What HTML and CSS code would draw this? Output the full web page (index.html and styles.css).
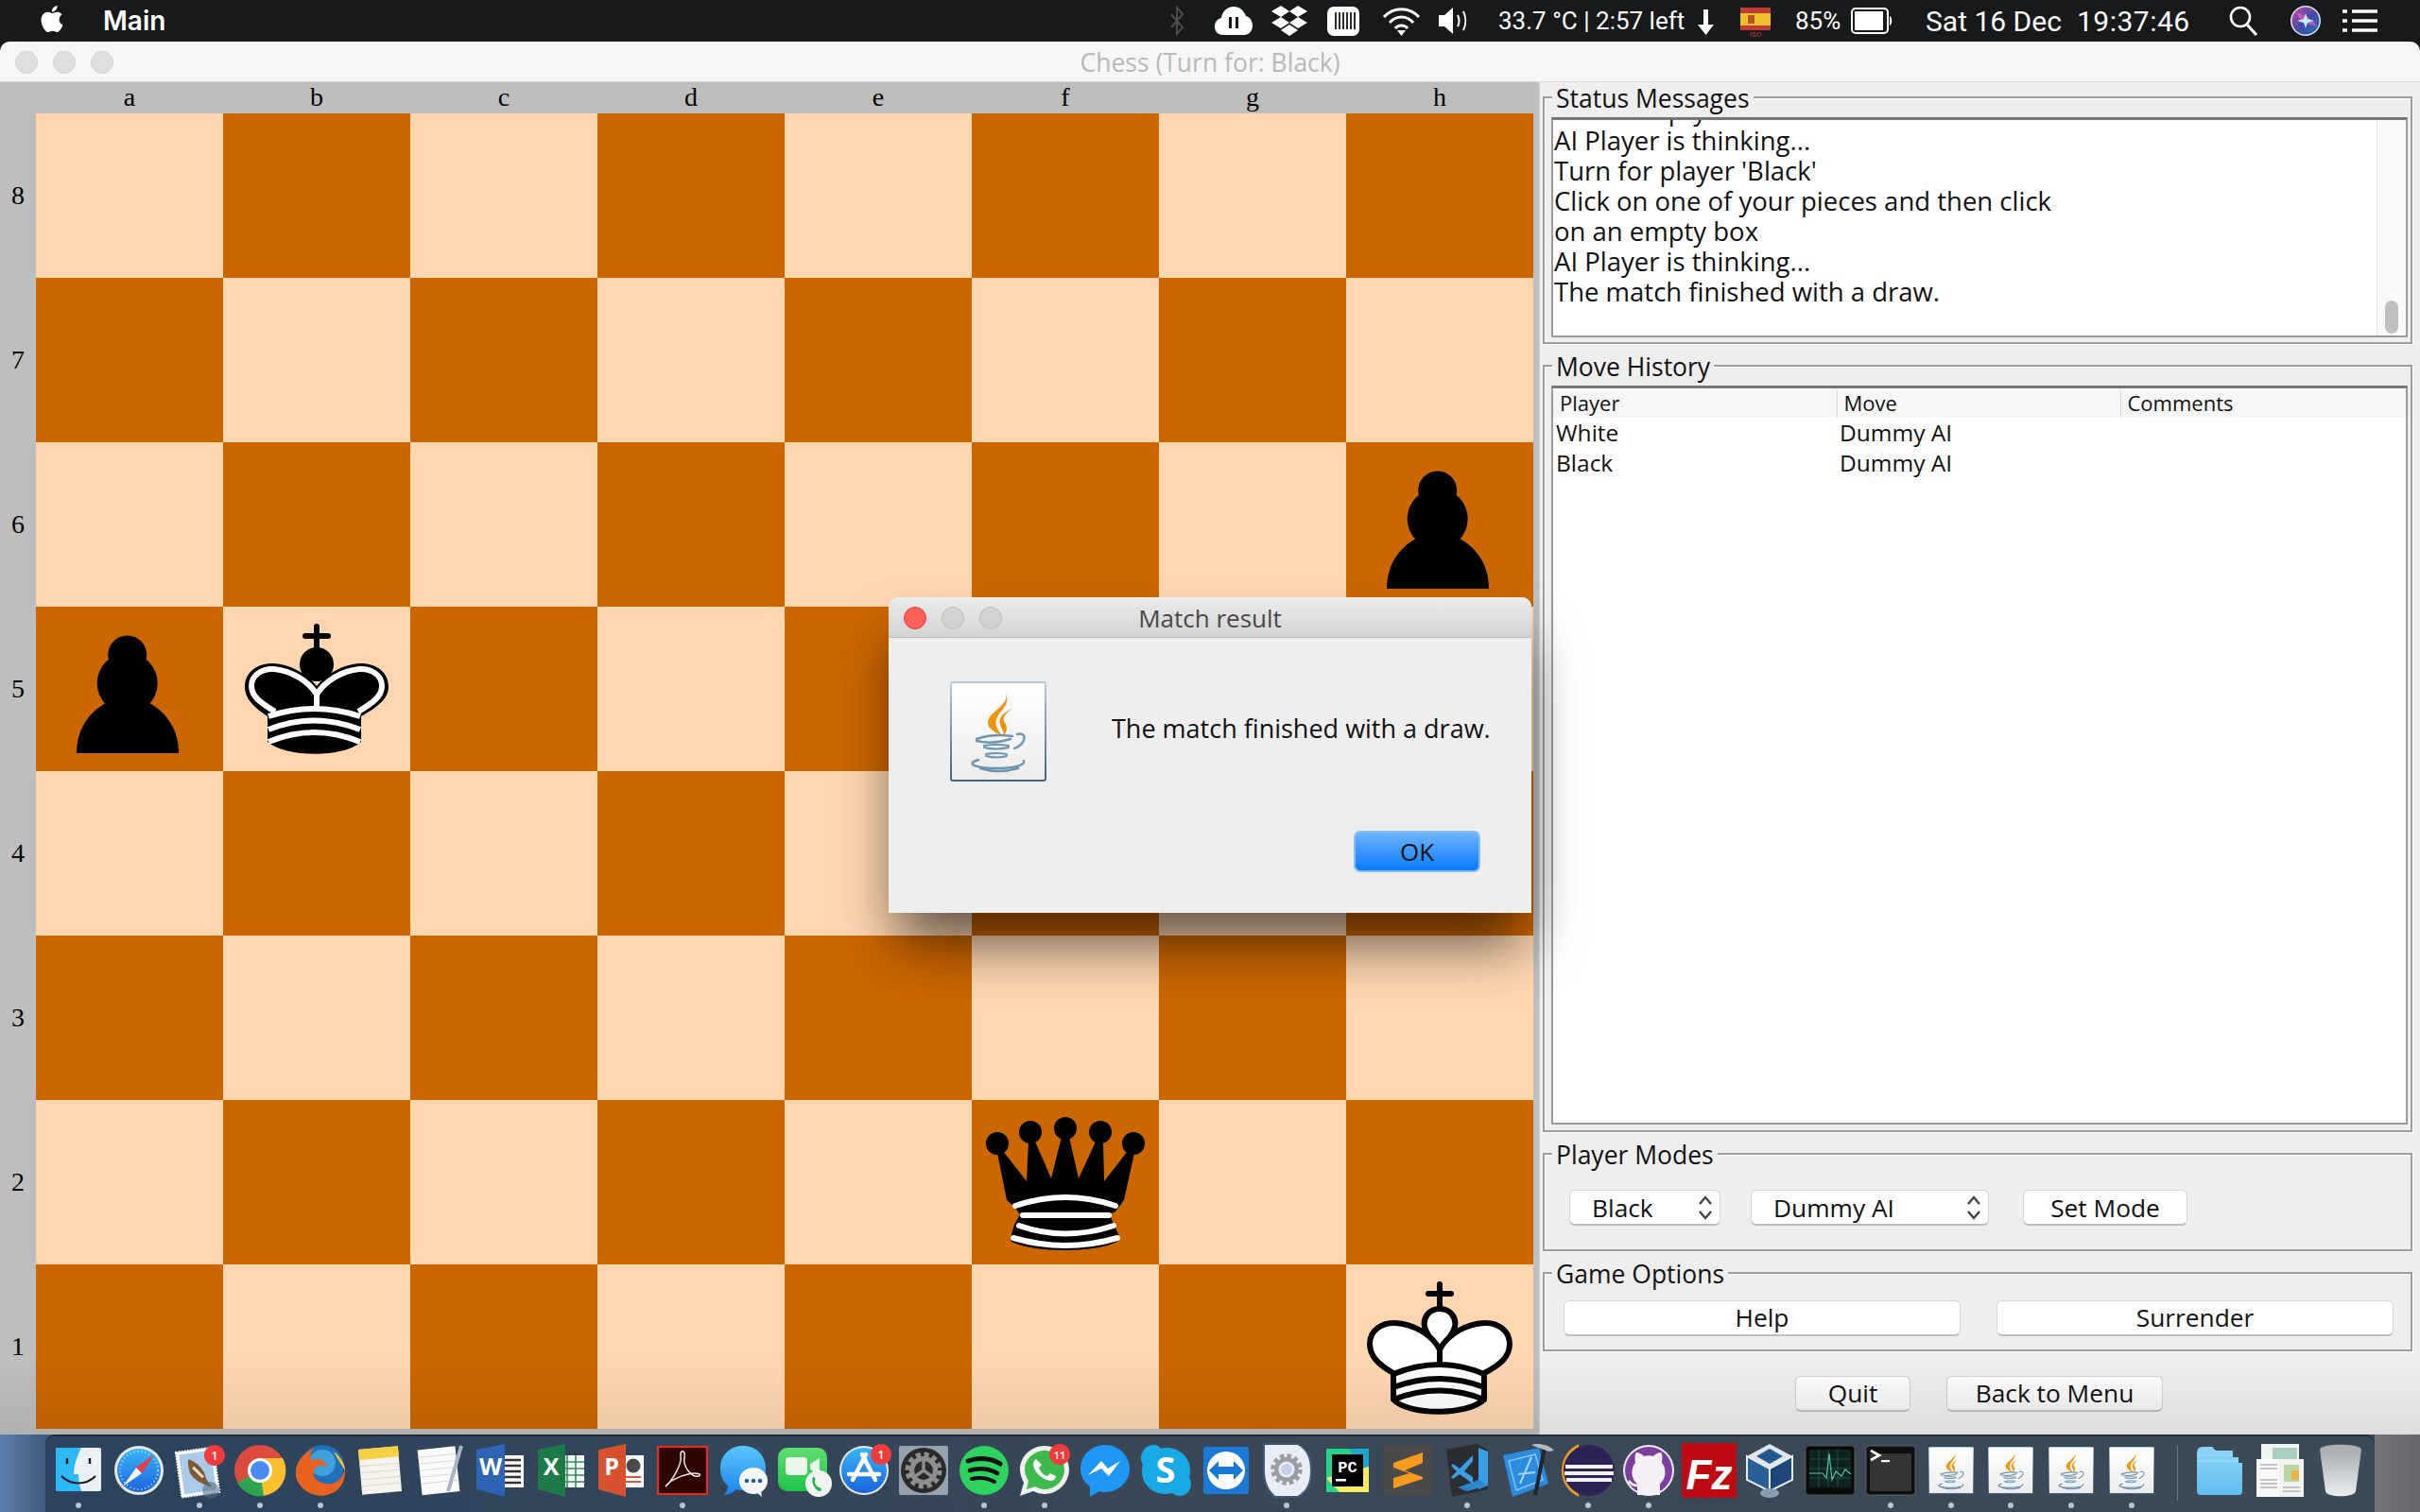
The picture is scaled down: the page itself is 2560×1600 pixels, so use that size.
FILE: index.html
```html
<!DOCTYPE html>
<html>
<head>
<meta charset="utf-8">
<title>Chess</title>
<link rel="stylesheet" href="styles.css">
</head>
<body>

<svg class="defs" width="0" height="0">
	<defs>
		<linearGradient id="paper" x1="0" y1="0" x2="0" y2="1"><stop offset="0" stop-color="#ffffff"/><stop offset="1" stop-color="#ececec"/></linearGradient>
		<linearGradient id="paperedge" x1="0" y1="0" x2="0" y2="1"><stop offset="0" stop-color="#b4cbe0"/><stop offset="1" stop-color="#43617c"/></linearGradient>
		<linearGradient id="bluedisc" x1="0" y1="0" x2="0" y2="1"><stop offset="0" stop-color="#38b6f7"/><stop offset="1" stop-color="#1a63e0"/></linearGradient>
		<linearGradient id="greenbox" x1="0" y1="0" x2="0" y2="1"><stop offset="0" stop-color="#5fe06f"/><stop offset="1" stop-color="#1ec24a"/></linearGradient>
		<linearGradient id="msgblue" x1="0" y1="0" x2="0" y2="1"><stop offset="0" stop-color="#5ac8fa"/><stop offset="1" stop-color="#1a84f0"/></linearGradient>
		<linearGradient id="foldertab" x1="0" y1="0" x2="0" y2="1"><stop offset="0" stop-color="#8dd6f8"/><stop offset="1" stop-color="#62bdf0"/></linearGradient>
		<linearGradient id="trashcan" x1="0" y1="0" x2="0" y2="1"><stop offset="0" stop-color="#9fa6ab"/><stop offset="1" stop-color="#eceef0"/></linearGradient>
		<linearGradient id="siri" x1="0" y1="0" x2="1" y2="1"><stop offset="0" stop-color="#c9459f"/><stop offset=".55" stop-color="#3f4aa8"/><stop offset="1" stop-color="#2276b8"/></linearGradient>

		<symbol id="java" viewBox="0 0 102 106">
			<rect x="1" y="1" width="100" height="104" rx="2" fill="url(#paper)" stroke="url(#paperedge)" stroke-width="2"/>
			<path d="M59 11C64 26 40 32 40 44C40 50 48 54 55 58C50 50 46 46 50 38C53 30 64 26 59 11Z" fill="#ee950f"/>
			<path d="M68 28C58 32 50 38 53 46C54 50 58 53 56 58C62 52 60 46 57 42C55 38 60 32 68 28Z" fill="#ee950f"/>
			<g fill="none" stroke="#6d94b0" stroke-width="2.4" stroke-linecap="round">
				<path d="M28 61Q45 55 66 58"/>
				<path d="M28 63Q45 67 64 61"/>
				<path d="M71 56C82 53 81 66 68 71"/>
				<path d="M36 68Q48 66 62 68" stroke-width="2"/>
				<path d="M36 70Q48 73 62 70" stroke-width="2"/>
				<path d="M38 77Q50 75 60 77" stroke-width="2"/>
				<path d="M38 79Q50 82 60 79" stroke-width="2"/>
				<path d="M30 83C14 88 30 92 50 92C66 92 80 89 78 84"/>
				<path d="M32 92Q50 98 72 92"/>
			</g>
		</symbol>

		<symbol id="gear" viewBox="0 0 60 60">
			<circle cx="30" cy="30" r="17" fill="none" stroke="currentColor" stroke-width="7"/>
			<circle cx="30" cy="30" r="23" fill="none" stroke="currentColor" stroke-width="7" stroke-dasharray="7 5.05"/>
		</symbol>
	</defs>
</svg>

<div class="menubar">
	<svg class="m-apple" width="28" height="32" viewBox="0 0 24 24"><path fill="#fff" d="M12.152 6.896c-.948 0-2.415-1.078-3.96-1.04-2.04.027-3.91 1.183-4.961 3.014-2.117 3.675-.546 9.103 1.519 12.09 1.013 1.454 2.208 3.09 3.792 3.039 1.52-.065 2.09-.987 3.935-.987 1.831 0 2.35.987 3.96.948 1.637-.026 2.676-1.48 3.676-2.948 1.156-1.688 1.636-3.325 1.662-3.415-.039-.013-3.182-1.221-3.22-4.857-.026-3.04 2.48-4.494 2.597-4.559-1.429-2.09-3.623-2.324-4.39-2.376-2-.156-3.675 1.09-4.61 1.09zM15.53 3.83c.843-1.012 1.4-2.427 1.245-3.83-1.207.052-2.662.805-3.532 1.818-.78.896-1.454 2.338-1.273 3.714 1.338.104 2.715-.688 3.559-1.701"/></svg>
	<span class="m-app">Main</span>
	<div class="m-spacer"></div>

	<svg class="m-bt" width="16" height="32" viewBox="0 0 16 32"><path d="M2 9l12 14-6 7V2l6 7-12 14" fill="none" stroke="#4c4c4c" stroke-width="2"/></svg>
	<svg class="m-cloud" width="40" height="32" viewBox="0 0 40 32"><path fill="#fff" d="M9 31C3 31 0 27 0 22c0-5 3-8 7-9C8 6 13 1 20 1c6 0 11 4 13 10 4 1 7 5 7 10 0 6-4 10-9 10z"/><rect x="15" y="12" width="3" height="12" fill="#18191b"/><rect x="22" y="12" width="3" height="12" fill="#18191b"/></svg>
	<svg class="m-drop" width="38" height="32" viewBox="0 0 38 32"><path fill="#fff" d="M10 0l9 6-9 6-10-6zM28 0l10 6-10 6-9-6zM0 18l10-6 9 6-9 6zM38 18l-10-6-9 6 9 6zM10 26l9-6 9 6-9 6z"/></svg>
	<svg class="m-istat" width="34" height="32" viewBox="0 0 34 32"><rect width="34" height="31" y="1" rx="7" fill="#fff"/><path d="M9 7v18M13 7v18M17 7v18M21 7v18M25 7v18M29 7v18" stroke="#18191b" stroke-width="1.8"/></svg>
	<svg class="m-wifi" width="41" height="32" viewBox="0 0 41 32"><g fill="none" stroke="#fff" stroke-width="3"><path d="M2 12C12 1 29 1 39 12"/><path d="M8 18C15 10 26 10 33 18"/><path d="M14 24C17 20 24 20 27 24"/></g><path d="M20.500 32l-4.500-6h9z" fill="#fff"/></svg>
	<svg class="m-vol" width="33" height="32" viewBox="0 0 33 32"><path fill="#fff" d="M0 10h6l9-8v28l-9-8H0z"/><g fill="none" stroke="#fff" stroke-width="2"><path d="M20 10c2 4 2 8 0 12"/><path d="M26 6c3 6 3 14 0 20"/></g></svg>
	<span class="m-text m-temp">33.7 °C | 2:57 left</span>
	<svg class="m-arrow" width="17" height="32" viewBox="0 0 17 32"><path fill="#fff" d="M6 4h5v16h6L8.500 31 0 20h6z"/></svg>
	<svg class="m-flag" width="32" height="36" viewBox="0 0 32 36"><rect y="4" width="32" height="6" fill="#c23a35"/><rect y="10" width="32" height="13" fill="#f1bf2b"/><rect y="23" width="32" height="5" fill="#c23a35"/><rect x="8" y="12" width="7" height="9" fill="#b3542a"/><text x="16" y="35" class="m-iso">ISO</text></svg>
	<span class="m-text m-pct">85%</span>
	<svg class="m-batt" width="44" height="28" viewBox="0 0 44 28"><rect x="1" y="1" width="38" height="26" rx="4" fill="none" stroke="#fff" stroke-width="2"/><rect x="4" y="4" width="30" height="20" fill="#fff"/><path d="M41 9c3 1 3 9 0 10z" fill="#fff"/></svg>
	<span class="m-text m-date">Sat 16 Dec</span>
	<span class="m-text m-time">19:37:46</span>
	<svg class="m-search" width="30" height="32" viewBox="0 0 30 32"><circle cx="12" cy="12" r="10" fill="none" stroke="#fff" stroke-width="2.600"/><path d="M19 20l10 11" stroke="#fff" stroke-width="3"/></svg>
	<svg class="m-siri" width="32" height="32" viewBox="0 0 32 32"><circle cx="16" cy="16" r="16" fill="#dfe3ea"/><circle cx="16" cy="16" r="14.500" fill="url(#siri)"/><path d="M6 7C14 10 22 12 28 22 20 20 10 18 6 7Z" fill="#e65fc0" opacity=".7"/><path d="M16 8l2 6 7 2-7 2-2 6-2-6-7-2 7-2z" fill="#bdf2f7"/></svg>
	<svg class="m-list" width="37" height="26" viewBox="0 0 37 26"><path d="M0 3h5M10 3h27M0 13h5M10 13h27M0 23h5M10 23h27" stroke="#fff" stroke-width="3.400"/></svg>
</div>

<div class="window">
	<div class="titlebar">
		<div class="lights">
			<span class="light"></span><span class="light"></span><span class="light"></span>
		</div>
		<span class="title">Chess (Turn for: Black)</span>
	</div>

	<div class="content">
		<div class="board">
			<div></div>
			<div class="col">a</div><div class="col">b</div><div class="col">c</div><div class="col">d</div><div class="col">e</div><div class="col">f</div><div class="col">g</div><div class="col">h</div>

			<div class="row">8</div>
			<div class="sq lt"></div><div class="sq dk"></div><div class="sq lt"></div><div class="sq dk"></div><div class="sq lt"></div><div class="sq dk"></div><div class="sq lt"></div><div class="sq dk"></div>

			<div class="row">7</div>
			<div class="sq dk"></div><div class="sq lt"></div><div class="sq dk"></div><div class="sq lt"></div><div class="sq dk"></div><div class="sq lt"></div><div class="sq dk"></div><div class="sq lt"></div>

			<div class="row">6</div>
			<div class="sq lt"></div><div class="sq dk"></div><div class="sq lt"></div><div class="sq dk"></div><div class="sq lt"></div><div class="sq dk"></div><div class="sq lt"></div>
			<div class="sq dk">
				<svg class="piece" viewBox="0 0 198 174"><circle cx="96.700" cy="51" r="20.500"/><circle cx="96.700" cy="81" r="32"/><path d="M43 155C43 128 58 109 78 100H116C136 109 151 128 151 155Z"/></svg>
			</div>

			<div class="row">5</div>
			<div class="sq dk">
				<svg class="piece" viewBox="0 0 198 174"><circle cx="96.700" cy="51" r="20.500"/><circle cx="96.700" cy="81" r="32"/><path d="M43 155C43 128 58 109 78 100H116C136 109 151 128 151 155Z"/></svg>
			</div>
			<div class="sq lt">
				<svg class="piece" viewBox="0 0 198 174">
					<path d="M99 21V45M87 31H111" stroke="#000" stroke-width="6" stroke-linecap="round" fill="none"/>
					<circle cx="99" cy="61" r="18"/>
					<path d="M47 116C32 106 23 97 23 85 23 68 38 59 54 60 70 61 88 70 99 84 110 70 128 61 144 60 160 59 175 68 175 85 175 97 164 106 146 116V143C128 160 66 160 47 143Z"/>
					<path d="M55 111C40 102 30 95 30 84 30 72 42 65 54 66 72 68 90 78 99 93 108 78 126 68 144 66 156 65 168 72 168 84 168 95 158 102 143 111M99 93V108" fill="none" stroke="#fff" stroke-width="6"/>
					<path d="M48 116Q96 100 145 116M48 130Q96 111 145 130M48 143Q96 123 145 143" fill="none" stroke="#fff" stroke-width="6"/>
				</svg>
			</div>
			<div class="sq dk"></div><div class="sq lt"></div><div class="sq dk"></div><div class="sq lt"></div><div class="sq dk"></div><div class="sq lt"></div>

			<div class="row">4</div>
			<div class="sq lt"></div><div class="sq dk"></div><div class="sq lt"></div><div class="sq dk"></div><div class="sq lt"></div><div class="sq dk"></div><div class="sq lt"></div><div class="sq dk"></div>

			<div class="row">3</div>
			<div class="sq dk"></div><div class="sq lt"></div><div class="sq dk"></div><div class="sq lt"></div><div class="sq dk"></div><div class="sq lt"></div><div class="sq dk"></div><div class="sq lt"></div>

			<div class="row">2</div>
			<div class="sq lt"></div><div class="sq dk"></div><div class="sq lt"></div><div class="sq dk"></div><div class="sq lt"></div>
			<div class="sq dk">
				<svg class="piece" viewBox="0 0 198 174">
					<circle cx="27" cy="46" r="12"/><circle cx="62" cy="34" r="12"/><circle cx="99" cy="30" r="12"/><circle cx="136" cy="34" r="12"/><circle cx="171" cy="46" r="12"/>
					<path d="M37 106L27 56 33 54 58 86 60 44H67L84 83 95 39H103L113 83 131 44H139L140 86 165 54 172 56 161 106 152 118 146 121 149 129 156 144 154 150C130 162 66 162 42 150L41 146 45 132 51 121 45 113Z"/>
					<path d="M46 112Q99 94 152 112M54 122H145M50 133Q99 150 150 133M44 146Q99 162 154 146" fill="none" stroke="#fff" stroke-width="6" stroke-linecap="round"/>
				</svg>
			</div>
			<div class="sq lt"></div><div class="sq dk"></div>

			<div class="row">1</div>
			<div class="sq dk"></div><div class="sq lt"></div><div class="sq dk"></div><div class="sq lt"></div><div class="sq dk"></div><div class="sq lt"></div><div class="sq dk"></div>
			<div class="sq lt">
				<svg class="piece" viewBox="0 0 198 174">
					<path d="M99 21V44M87 31H111" stroke="#000" stroke-width="6" stroke-linecap="round" fill="none"/>
					<path d="M99 47C88 47 81 56 83 66 85 74 92 82 99 92 106 82 113 74 115 66 117 56 110 47 99 47Z" fill="#fff" stroke="#000" stroke-width="6"/>
					<path d="M50 115C34 106 25 97 25 84 25 70 38 61 52 62 70 63 90 73 99 90 108 73 128 63 146 62 160 61 173 70 173 84 173 97 164 106 146 115V143C128 160 66 160 50 143Z" fill="#fff" stroke="#000" stroke-width="6" stroke-linejoin="round"/>
					<path d="M99 90V108M50 116Q99 96 146 116M50 130Q99 112 146 130M50 143Q99 124 146 143" fill="none" stroke="#000" stroke-width="6"/>
				</svg>
			</div>
		</div>

		<div class="panel">
			<fieldset class="group group-status">
				<legend>Status Messages</legend>
				<div class="textbox">
					<div class="textclip">
						<div class="msg msg-cut">on an empty box</div>
						<div class="msg">AI Player is thinking...</div>
						<div class="msg">Turn for player 'Black'</div>
						<div class="msg">Click on one of your pieces and then click</div>
						<div class="msg">on an empty box</div>
						<div class="msg">AI Player is thinking...</div>
						<div class="msg">The match finished with a draw.</div>
					</div>
					<div class="scrollbar"><div class="thumb"></div></div>
				</div>
			</fieldset>

			<fieldset class="group group-history">
				<legend>Move History</legend>
				<div class="tablebox">
					<table class="moves">
						<tr><th>Player</th><th>Move</th><th>Comments</th></tr>
						<tr><td>White</td><td>Dummy AI</td><td></td></tr>
						<tr><td>Black</td><td>Dummy AI</td><td></td></tr>
					</table>
				</div>
			</fieldset>

			<fieldset class="group group-modes">
				<legend>Player Modes</legend>
				<div class="modes">
					<div class="btn combo combo-side">Black
						<svg class="updown" width="16" height="28" viewBox="0 0 16 28"><path d="M2 10l6-7 6 7M2 18l6 7 6-7" fill="none" stroke="#444" stroke-width="2.400"/></svg>
					</div>
					<div class="btn combo combo-ai">Dummy AI
						<svg class="updown" width="16" height="28" viewBox="0 0 16 28"><path d="M2 10l6-7 6 7M2 18l6 7 6-7" fill="none" stroke="#444" stroke-width="2.400"/></svg>
					</div>
					<div class="btn btn-setmode">Set Mode</div>
				</div>
			</fieldset>

			<fieldset class="group group-options">
				<legend>Game Options</legend>
				<div class="options">
					<div class="btn">Help</div>
					<div class="btn">Surrender</div>
				</div>
			</fieldset>

			<div class="foot">
				<div class="btn btn-quit">Quit</div>
				<div class="btn btn-back">Back to Menu</div>
			</div>
		</div>
	</div>

	<div class="dockshade"></div>

	<div class="dialog">
		<div class="dialog-title">
			<div class="lights dialog-lights">
				<span class="light light-close"></span><span class="light light-off"></span><span class="light light-off"></span>
			</div>
			<span class="dialog-name">Match result</span>
		</div>
		<div class="dialog-body">
			<svg class="dialog-icon" width="102" height="106"><use href="#java"/></svg>
			<div class="dialog-msg">The match finished with a draw.</div>
		</div>
		<div class="dialog-foot"><div class="btn-ok">OK</div></div>
	</div>
</div>

<div class="desktop">
	<div class="dock">
		<div class="ditem"><svg viewBox="0 0 60 60"><rect x="6" y="6" width="48" height="46" rx="2" fill="#eaf0f5"/><path d="M8 6H33C28 16 25 26 25 34H30C30 40 31 46 33 52H8A2 2 0 0 1 6 50V8A2 2 0 0 1 8 6Z" fill="#2db8f6"/><path d="M18 17v6M42 17v6" stroke="#1a1a1a" stroke-width="2.400"/><path d="M12 36C22 46 38 46 48 36" fill="none" stroke="#1a1a1a" stroke-width="2"/></svg><i class="dot"></i></div>

		<div class="ditem"><svg viewBox="0 0 60 60"><circle cx="30" cy="30" r="26" fill="#e6e8ea"/><circle cx="30" cy="30" r="23" fill="url(#bluedisc)"/><circle cx="30" cy="30" r="20" fill="none" stroke="#bfe1fa" stroke-width="2" stroke-dasharray="1 3"/><path d="M46 13L33 33 27 27Z" fill="#ee3a3a"/><path d="M13 47L27 27 33 33Z" fill="#f3f3f3"/></svg><i class="dot dot-off"></i></div>

		<div class="ditem"><svg viewBox="0 0 60 60"><g transform="rotate(-8 28 32)"><rect x="8" y="8" width="40" height="48" fill="#fff" stroke="#fff" stroke-width="2" stroke-dasharray="2 1"/><rect x="11" y="11" width="34" height="42" fill="#a9cbe8"/><path d="M20 17C28 20 36 30 36 40L41 50C34 46 24 42 20 32 19 26 19 22 20 17Z" fill="#7c5a3a"/><path d="M24 26L33 38" stroke="#e9dcc6" stroke-width="3"/></g><circle cx="42" cy="51" r="9" fill="#56677e" opacity=".55"/><circle cx="46" cy="14" r="11" fill="#ee3b3b"/><text x="46" y="19" class="badge-text">1</text></svg><i class="dot"></i></div>

		<div class="ditem"><svg viewBox="0 0 60 60"><circle cx="30" cy="30" r="27" fill="#dd4b3f"/><path d="M30 30V57A27 27 0 0 0 54 17H30Z" fill="#fbc02d"/><path d="M30 30L6 43A27 27 0 0 0 34 57Z" fill="#2da44e"/><circle cx="30" cy="30" r="13" fill="#fff"/><circle cx="30" cy="30" r="10" fill="#4a8af4"/></svg><i class="dot"></i></div>

		<div class="ditem"><svg viewBox="0 0 60 60"><circle cx="32" cy="26" r="23" fill="#1f70b8"/><circle cx="32" cy="22" r="14" fill="#3fa0dd"/><path d="M24 6C6 14 0 30 6 42 12 54 28 60 40 55 50 52 57 42 56 28 54 38 46 46 36 44 26 43 20 36 24 28 27 24 34 24 38 26 34 18 26 16 20 20 19 14 20 10 24 6Z" fill="#e8631f"/><path d="M44 10C52 16 56 24 56 30 52 24 48 18 44 10Z" fill="#f7c22b"/></svg><i class="dot"></i></div>

		<div class="ditem"><svg viewBox="0 0 60 60"><g transform="rotate(-5 30 30)"><rect x="9" y="6" width="42" height="48" fill="#f5f3ec"/><rect x="9" y="6" width="42" height="11" fill="#f6d044"/><path d="M9 24H51M9 31H51M9 38H51M9 45H51" stroke="#d8d6ce"/></g></svg><i class="dot dot-off"></i></div>

		<div class="ditem"><svg viewBox="0 0 60 60"><g transform="rotate(-6 30 30)"><rect x="8" y="6" width="40" height="48" fill="#fbfbfb"/><path d="M8 14H48M8 21H48M8 28H48M8 35H48M8 42H48" stroke="#d5d9df"/></g><path d="M52 4L38 52" stroke="#a7b6c4" stroke-width="4"/></svg><i class="dot dot-off"></i></div>

		<div class="ditem"><svg viewBox="0 0 60 60"><rect x="30" y="14" width="24" height="34" fill="#fbfbfb"/><path d="M34 19h17M34 25h17M34 31h17M34 37h17M34 43h17" stroke="#333" stroke-width="2.600"/><path d="M4 8L34 2V58L4 50Z" fill="#2f64b4"/><text x="19" y="35" class="icon-letter">W</text></svg><i class="dot dot-off"></i></div>

		<div class="ditem"><svg viewBox="0 0 60 60"><rect x="30" y="14" width="24" height="34" fill="#fbfbfb"/><path d="M36 14v34M45 14v34M30 21h24M30 28h24M30 35h24M30 42h24" stroke="#2d8f55" stroke-width="1.600"/><path d="M5 8L34 2V58L5 50Z" fill="#1d7a48"/><text x="19" y="35" class="icon-letter">X</text></svg><i class="dot dot-off"></i></div>

		<div class="ditem"><svg viewBox="0 0 60 60"><rect x="30" y="14" width="23" height="34" fill="#fbfbfb"/><circle cx="42" cy="25" r="7.500" fill="#4a4a4a"/><path d="M34 37h16M34 42h16" stroke="#d8573a" stroke-width="2"/><path d="M5 8L34 2V58L5 50Z" fill="#d9502e"/><text x="19" y="35" class="icon-letter">P</text></svg><i class="dot dot-off"></i></div>

		<div class="ditem"><svg viewBox="0 0 60 60"><rect x="3" y="4" width="54" height="52" fill="#ed2a1d"/><rect x="5" y="6" width="50" height="48" fill="#2f0503"/><path d="M12 47C18 42 30 24 28 14 27 8 34 8 32 16 30 26 40 38 47 36 52 34 44 32 36 34 26 36 15 42 12 47Z" fill="none" stroke="#f4e8e4" stroke-width="1.500"/></svg><i class="dot"></i></div>

		<div class="ditem"><svg viewBox="0 0 60 60"><path d="M30 4C16 4 6 14 6 28 6 36 9 42 14 46 14 50 12 54 9 56 15 56 20 53 23 50 25 51 27 51 30 51 44 51 54 42 54 28 54 14 44 4 30 4Z" fill="url(#msgblue)"/><ellipse cx="41" cy="41" rx="15" ry="14" fill="#f4f6f8"/><path d="M44 53l6 5-1-7z" fill="#f4f6f8"/><circle cx="34" cy="41" r="2.300" fill="#1f5fa8"/><circle cx="41" cy="41" r="2.300" fill="#1f5fa8"/><circle cx="48" cy="41" r="2.300" fill="#1f5fa8"/></svg><i class="dot dot-off"></i></div>

		<div class="ditem"><svg viewBox="0 0 60 60"><rect x="3" y="6" width="52" height="46" rx="10" fill="url(#greenbox)"/><rect x="11" y="16" width="23" height="19" rx="4" fill="#eaf7ea"/><path d="M37 23l10-6v18l-10-6z" fill="#eaf7ea"/><circle cx="46" cy="44" r="14" fill="#f2f6f2"/><path d="M40 37c2-1 3 3 2 4-1 2 2 6 4 7 2 0 4 2 2 4-4 1-11-8-8-15z" fill="#25b54b"/></svg><i class="dot dot-off"></i></div>

		<div class="ditem"><svg viewBox="0 0 60 60"><circle cx="30" cy="30" r="26" fill="#e6e9ec"/><circle cx="30" cy="30" r="24" fill="url(#bluedisc)"/><path d="M32 13L18 40M28 13L42 40M14 34H46" stroke="#fff" stroke-width="4.500" stroke-linecap="round"/><circle cx="48" cy="13" r="11" fill="#ee3b3b"/><text x="48" y="18" class="badge-text">1</text></svg><i class="dot dot-off"></i></div>

		<div class="ditem"><svg viewBox="0 0 60 60"><rect x="4" y="4" width="52" height="52" rx="2" fill="#93a2ad"/><circle cx="30" cy="30" r="24" fill="#2a2a2a"/><svg x="8" y="8" width="44" height="44" color="#8e8e8e"><use href="#gear"/></svg><path d="M30 30V19M30 30L20 37M30 30L40 37" stroke="#8e8e8e" stroke-width="3.500"/></svg><i class="dot dot-off"></i></div>

		<div class="ditem"><svg viewBox="0 0 60 60"><circle cx="30" cy="30" r="26" fill="#2dd25f"/><g fill="none" stroke="#111" stroke-linecap="round"><path d="M13 20C24 16 38 17 47 23" stroke-width="5"/><path d="M15 30C24 27 36 28 44 33" stroke-width="4.500"/><path d="M17 39C25 37 34 38 41 42" stroke-width="4"/></g></svg><i class="dot"></i></div>

		<div class="ditem"><svg viewBox="0 0 60 60"><path d="M30 4C16 4 4 15 4 29 4 34 6 39 8 43L4 57 18 52C22 54 26 55 30 55 44 55 56 43 56 29 56 15 44 4 30 4Z" fill="#eef1ee"/><path d="M30 9C19 9 9 18 9 29 9 34 11 38 13 41L11 50 20 47C23 49 27 50 30 50 41 50 51 41 51 29 51 18 41 9 30 9Z" fill="#3dba4e"/><path d="M21 18C19 19 18 22 18 24 19 32 28 40 36 41 39 41 42 39 42 36L36 33 33 36C29 35 25 31 24 27L27 24Z" fill="#fff"/><circle cx="46" cy="13" r="11" fill="#ee3b3b"/><text x="46" y="18" class="badge-text badge-text-small">11</text></svg><i class="dot"></i></div>

		<div class="ditem"><svg viewBox="0 0 60 60"><path d="M30 3C16 3 4 14 4 28 4 36 8 43 14 47V58L24 52C26 53 28 53 30 53 44 53 56 42 56 28 56 14 44 3 30 3Z" fill="#1f97f7"/><path d="M12 35L26 20 33 28 46 20 34 36 26 28Z" fill="#fff"/></svg><i class="dot dot-off"></i></div>

		<div class="ditem"><svg viewBox="0 0 60 60"><path d="M18 3C10 3 4 9 4 17 4 20 5 22 6 24 5 26 5 29 5 31 5 45 16 55 30 55 33 55 35 54 37 54 40 56 42 57 45 57 52 57 57 51 57 44 57 42 56 39 55 37 56 35 56 33 56 30 56 16 45 6 31 6 29 6 27 6 25 7 23 4 21 3 18 3Z" fill="#19a9e5"/><text x="30" y="43" class="icon-skype">S</text></svg><i class="dot dot-off"></i></div>

		<div class="ditem"><svg viewBox="0 0 60 60"><rect x="6" y="5" width="48" height="50" rx="2" fill="#1a78d6"/><circle cx="30" cy="30" r="20" fill="#fff"/><path d="M12 30L22 20V26H38V20L48 30 38 40V34H22V40Z" fill="#1a78d6"/></svg><i class="dot dot-off"></i></div>

		<div class="ditem"><svg viewBox="0 0 60 60"><path d="M6 2H42C52 8 56 16 56 30 56 44 52 52 42 58H18C10 52 6 44 6 30Z" fill="#e8edf6" stroke="#40587e" stroke-width="2"/><svg x="11" y="10" width="38" height="38" color="#9a9da3"><use href="#gear"/></svg><circle cx="30" cy="29" r="6" fill="#c2d0e8"/></svg><i class="dot"></i></div>

		<div class="ditem"><svg viewBox="0 0 60 60"><rect x="8" y="7" width="45" height="46" fill="#21d789"/><path d="M32 7H53V40Z" fill="#19a7ce"/><path d="M8 38L53 26V53H22Z" fill="#f7ec5f"/><rect x="14" y="13" width="33" height="34" fill="#000"/><text x="30.500" y="32" class="icon-pc">PC</text><rect x="18" y="39" width="11" height="2.500" fill="#fff"/></svg><i class="dot dot-off"></i></div>

		<div class="ditem"><svg viewBox="0 0 60 60"><rect x="4" y="3" width="52" height="54" rx="3" fill="#4a4a4a"/><path d="M46 11V22L27 30 46 37V39L15 49V38L32 33 15 27V22Z" fill="#f89a1d"/></svg><i class="dot dot-off"></i></div>

		<div class="ditem"><svg viewBox="0 0 60 60"><path d="M8 8L40 2 52 8V50L14 58Z" fill="#2b2d31"/><path d="M42 6L52 10V46L42 50Z" fill="#3a9fe4"/><path d="M20 48L42 40 52 46 30 52Z" fill="#2a87cf"/><path d="M36 14L22 28 15 23 13 25 19 31 13 37 15 39 22 34 36 44Z" fill="#3a9fe4"/><path d="M36 20L27 31 36 37Z" fill="#2b2d31"/></svg><i class="dot"></i></div>

		<div class="ditem"><svg viewBox="0 0 60 60"><path d="M4 14L42 6 52 44 14 58Z" fill="#2a8ce0"/><path d="M10 20L38 13 46 40 18 51Z" fill="none" stroke="#87c2f4" stroke-width="1.500"/><path d="M22 44L34 16M20 34L38 32" stroke="#a8d4f7" stroke-width="2"/><path d="M48 6L38 56" stroke="#22262a" stroke-width="4"/><path d="M34 3C40 1 52 2 58 9L52 10C46 7 40 6 34 3Z" fill="#b4bac0"/></svg><i class="dot dot-off"></i></div>

		<div class="ditem"><svg viewBox="0 0 60 60"><path d="M20 2C8 8 2 18 2 30 2 42 8 52 20 58Z" fill="#f19a22"/><circle cx="31" cy="30" r="27" fill="#2c2255"/><path d="M6 24H56V28H6ZM5 31H57V35H5ZM7 38H55V42H7Z" fill="#f4f0fb"/></svg><i class="dot"></i></div>

		<div class="ditem"><svg viewBox="0 0 60 60"><circle cx="30" cy="30" r="27" fill="#efeaf2"/><circle cx="30" cy="30" r="25" fill="#7d3f9e"/><path d="M18 56V44C10 38 12 26 16 22 15 16 16 12 17 11 21 11 24 14 25 15 28 14 32 14 35 15 36 14 39 11 43 11 44 12 45 16 44 22 48 26 50 38 42 44V56Z" fill="#f4f0f6"/><path d="M18 46C14 46 11 44 9 41" stroke="#f4f0f6" stroke-width="3" fill="none"/></svg><i class="dot"></i></div>

		<div class="ditem"><svg viewBox="0 0 60 60"><rect x="2" y="2" width="56" height="56" fill="#bf0a11" stroke="#bf0a11" stroke-width="3" stroke-dasharray="3 2"/><text x="30" y="50" class="icon-fz">Fz</text></svg><i class="dot dot-off"></i></div>

		<div class="ditem"><svg viewBox="0 0 60 60"><path d="M30 2L54 15V40L30 52 6 40V15Z" fill="#1f4f85"/><path d="M30 2L54 15 30 28 6 15Z" fill="#dfe6ee"/><path d="M16 15L30 7 44 15 30 23Z" fill="#25588f"/><path d="M6 15L30 28V52L6 40Z" fill="#2a5f99" stroke="#e6ecf2" stroke-width="2"/><path d="M54 15L30 28V52L54 40Z" fill="#1c4678" stroke="#e6ecf2" stroke-width="2"/><ellipse cx="30" cy="54" rx="10" ry="5" fill="#8b9bb0"/></svg><i class="dot dot-off"></i></div>

		<div class="ditem"><svg viewBox="0 0 60 60"><rect x="4" y="4" width="52" height="52" rx="3" fill="#0b0b0b" stroke="#555"/><rect x="8" y="8" width="44" height="40" fill="#0c2320"/><path d="M8 18H52M8 28H52M8 38H52M18 8V48M28 8V48M38 8V48" stroke="#2a4c46"/><path d="M8 33H22L26 38 29 12 32 40 36 31 42 36 46 29 52 34" fill="none" stroke="#56c2a5" stroke-width="1.200"/></svg><i class="dot dot-off"></i></div>

		<div class="ditem"><svg viewBox="0 0 60 60"><rect x="4" y="4" width="52" height="52" rx="3" fill="#0e0e0e" stroke="#5c6268"/><rect x="8" y="12" width="44" height="40" fill="#353535"/><path d="M9 9L18 14 9 19" fill="none" stroke="#fff" stroke-width="2.600"/><rect x="20" y="19" width="9" height="2.200" fill="#fff"/></svg><i class="dot"></i></div>

		<div class="ditem"><svg class="dock-java" viewBox="0 0 102 106"><use href="#java"/></svg><i class="dot"></i></div>
		<div class="ditem"><svg class="dock-java" viewBox="0 0 102 106"><use href="#java"/></svg><i class="dot"></i></div>
		<div class="ditem"><svg class="dock-java" viewBox="0 0 102 106"><use href="#java"/></svg><i class="dot"></i></div>
		<div class="ditem"><svg class="dock-java" viewBox="0 0 102 106"><use href="#java"/></svg><i class="dot"></i></div>

		<div class="divider"></div>

		<div class="ditem"><svg viewBox="0 0 60 60"><path d="M6 12Q6 5 12 5H22L26 9H44V16H50V22H54V52Q54 56 50 56H10Q6 56 6 52Z" fill="url(#foldertab)"/><path d="M6 14H44M6 20H50" stroke="#a5e0fb" stroke-width="1.200"/></svg><i class="dot dot-off"></i></div>

		<div class="ditem"><svg viewBox="0 0 60 60"><rect x="10" y="2" width="40" height="24" fill="#f2f4f2"/><path d="M22 6h26v14H22z" fill="#a9cfc1"/><rect x="5" y="18" width="26" height="40" fill="#f7f7f7"/><path d="M9 24h18M9 28h18M9 40h18M9 44h18M9 48h18" stroke="#8e9396"/><rect x="29" y="18" width="26" height="40" fill="#f2f2f2"/><path d="M34 24H50V42H34Z" fill="#bcd4a8"/><path d="M42 30H50V40H42Z" fill="#e6b34c"/><path d="M33 48h18M33 52h18" stroke="#8e9396"/></svg><i class="dot dot-off"></i></div>

		<div class="ditem"><svg viewBox="0 0 60 60"><path d="M8 8C8 1 52 1 52 8L46 52C45 59 15 59 14 52Z" fill="url(#trashcan)"/><ellipse cx="30" cy="8" rx="21" ry="5" fill="#aab0b4"/></svg><i class="dot dot-off"></i></div>
	</div>
</div>

</body>
</html>
```

FILE: styles.css
```css
html, body {
	margin: 0;
	padding: 0;
}

body {
	width: 2560px;
	height: 1600px;
	overflow: hidden;
	display: flex;
	flex-direction: column;
	font-family: "Open Sans", sans-serif;
	background: #18191b;
}

.defs {
	position: absolute;
}

/* top menu bar */

.menubar {
	height: 44px;
	flex: none;
	display: flex;
	align-items: center;
	padding-right: 45px;
	background: #18191b;
	color: #fff;
}

.menubar svg {
	flex: none;
}

.m-apple { margin: -4px 0 0 41px; }
.m-app { margin-left: 40px; font: 600 28px "Inter", sans-serif; }
.m-spacer { flex: 1; }

.m-text {
	font: 400 26px "Roboto", sans-serif;
	white-space: nowrap;
}

.m-iso {
	font: 8px "Roboto", sans-serif;
	fill: #c23a35;
	text-anchor: middle;
}

.m-cloud { margin-left: 32px; }
.m-drop { margin-left: 20px; }
.m-istat { margin-left: 21px; }
.m-wifi { margin-left: 24px; }
.m-vol { margin-left: 19px; }
.m-temp { margin-left: 30px; width: 201px; }
.m-arrow { margin-left: 10px; }
.m-flag { margin-left: 28px; }
.m-pct { margin-left: 26px; width: 50px; }
.m-batt { margin-left: 9px; }
.m-date { margin-left: 35px; width: 144px; font-size: 30px; }
.m-time { margin-left: 16px; width: 122px; font-size: 30px; letter-spacing: 0.5px; }
.m-search { margin-left: 39px; }
.m-siri { margin-left: 35px; }
.m-list { margin-left: 23px; }

/* chess window */

.window {
	position: relative;
	flex: none;
	height: 1474px;
	display: flex;
	flex-direction: column;
}

.titlebar {
	height: 42px;
	flex: none;
	display: flex;
	align-items: center;
	justify-content: center;
	position: relative;
	background: #f6f6f6;
	border-bottom: 1px solid #d8d8d8;
	border-radius: 10px 10px 0 0;
}

.title {
	padding-top: 2px;
	font-size: 26.5px;
	color: #b9b9b9;
}

.lights {
	display: flex;
	gap: 16px;
	position: absolute;
	left: 16px;
	top: 10px;
}

.light {
	width: 22px;
	height: 22px;
	border: 1px solid #d2d2d2;
	border-radius: 50%;
	background: #dfdfdf;
}

.content {
	flex: 1;
	display: flex;
	min-height: 0;
}

/* board */

.board {
	width: 1628px;
	flex: none;
	display: grid;
	grid-template-columns: 38px repeat(8, 198px) 6px;
	grid-template-rows: 33px repeat(8, 174px) 6px;
	background: #bebebe;
	font: 28px "Liberation Serif", serif;
	color: #000;
}

.col, .row {
	display: flex;
	align-items: center;
	justify-content: center;
}

.col {
	padding-bottom: 1px;
}

.row {
	grid-column: 1;
}

.lt { background: #ffd6b0; }
.dk { background: #cc6600; }

.piece {
	display: block;
	width: 198px;
	height: 174px;
}

/* right panel */

.panel {
	flex: 1;
	display: flex;
	flex-direction: column;
	gap: 7px;
	padding: 0 8px 0 3px;
	background: #eeeeee;
	border-left: 1px solid #d6d6d6;
	min-width: 0;
	font-size: 27.5px;
	color: #111;
}

.group {
	margin: 0;
	padding: 0;
	min-width: 0;
	box-sizing: border-box;
	border: 2px solid #9e9e9e;
	box-shadow: 1px 1px 0 #fff, inset 1px 1px 0 #fff;
}

.group legend {
	margin-left: 8px;
	padding: 2px 4px 0;
	font-size: 26.5px;
	line-height: 30px;
	background: #eeeeee;
}

.group-status { height: 277px; }
.group-history { height: 827px; }
.group-modes { height: 119px; }
.group-options { height: 99px; }

.textbox {
	height: 233px;
	margin: 5px 3px 0 7px;
	box-sizing: border-box;
	display: flex;
	background: #fff;
	border: 2px solid #9a9a9a;
	border-top: 3px solid #757575;
}

.textclip {
	flex: 1;
	overflow: hidden;
	padding-left: 1px;
}

.msg {
	height: 32px;
	line-height: 32px;
	white-space: nowrap;
}

.msg-cut {
	margin-top: -26px;
}

.scrollbar {
	width: 31px;
	flex: none;
	display: flex;
	align-items: flex-end;
	justify-content: center;
	padding-bottom: 2px;
	box-sizing: border-box;
	background: #fafafa;
	border-left: 1px solid #e8e8e8;
}

.thumb {
	width: 14px;
	height: 35px;
	background: #c0c0c0;
	border-radius: 7px;
}

.tablebox {
	height: 782px;
	margin: 5px 3px 0 7px;
	box-sizing: border-box;
	background: #fff;
	border: 2px solid #9a9a9a;
	border-top: 3px solid #757575;
}

.moves {
	width: 100%;
	table-layout: fixed;
	border-collapse: collapse;
}

.moves th {
	width: 300px;
	height: 30px;
	box-sizing: border-box;
	padding: 0 0 2px 7px;
	text-align: left;
	font-weight: 400;
	font-size: 22px;
	line-height: 26px;
	background: #f6f6f6;
	border-left: 1px solid #dcdcdc;
	border-top: 1px solid #fff;
}

.moves th:first-child {
	border-left: 0;
}

.moves th:last-child {
	width: auto;
}

.moves td {
	height: 32px;
	box-sizing: border-box;
	padding: 0 0 0 3px;
	font-size: 24.5px;
	line-height: 32px;
}

/* buttons */

.btn {
	height: 38px;
	line-height: 35px;
	box-sizing: border-box;
	text-align: center;
	font-size: 26.3px;
	background: #fff;
	border: 1px solid #d4d4d4;
	border-bottom: 2px solid #bcbcbc;
	border-radius: 6px;
	white-space: nowrap;
}

.modes {
	display: flex;
	margin: 22px 0 0 26px;
}

.modes .btn {
	padding-top: 1px;
}

.combo {
	display: flex;
	align-items: center;
	justify-content: space-between;
	padding: 0 7px 0 23px;
}

.combo-side { width: 160px; }
.combo-ai { width: 252px; margin-left: 32px; }
.btn-setmode { width: 174px; margin-left: 36px; }

.options {
	display: grid;
	grid-template-columns: 420px 420px;
	gap: 38px;
	margin: 13px 0 0 20px;
}

.foot {
	display: flex;
	justify-content: center;
	gap: 38px;
	margin: 19px 0 0 3px;
}

.btn-quit { width: 122px; background: linear-gradient(#fff, #f4f4f4); }
.btn-back { width: 229px; background: linear-gradient(#fff, #f4f4f4); }

/* darker band the dock throws on the window */

.dockshade {
	position: absolute;
	left: 0;
	right: 0;
	bottom: 0;
	height: 84px;
	background: linear-gradient(rgba(0,0,0,0), rgba(0,0,0,0.07));
	pointer-events: none;
}

/* dialog */

.dialog {
	position: absolute;
	left: 940px;
	top: 588px;
	width: 680px;
	height: 334px;
	display: flex;
	flex-direction: column;
	background: #eeeeee;
	border-radius: 10px 10px 0 0;
	box-shadow: 0 40px 60px -8px rgba(0,0,0,0.6);
}

.dialog-title {
	height: 42px;
	flex: none;
	position: relative;
	display: flex;
	align-items: center;
	justify-content: center;
	background: linear-gradient(#ececec, #d3d3d3);
	border-bottom: 1px solid #b6b6b6;
	border-radius: 10px 10px 0 0;
}

.dialog-name {
	padding-top: 2px;
	font-size: 26px;
	color: #484848;
}

.dialog-lights {
	left: 16px;
	top: 10px;
	gap: 16px;
}

.light-close {
	background: #ff5f57;
	border-color: #e2463f;
}

.light-off {
	background: #d2d2d2;
	border-color: #bcbcbc;
}

.dialog-body {
	display: flex;
	height: 204px;
	box-sizing: border-box;
	padding: 46px 0 0 65px;
}

.dialog-msg {
	margin: 32px 0 0 69px;
	font-size: 27px;
	line-height: 36px;
	white-space: nowrap;
	color: #111;
}

.dialog-foot {
	display: flex;
	justify-content: flex-end;
	padding-right: 54px;
}

.btn-ok {
	width: 134px;
	height: 44px;
	line-height: 40px;
	box-sizing: border-box;
	text-align: center;
	font-size: 26px;
	color: #111;
	background: linear-gradient(#6db4fb, #0a7bff);
	border: 2px solid #85bdf6;
	border-radius: 7px;
}

/* desktop and dock */

.desktop {
	flex: 1;
	display: flex;
	background: linear-gradient(90deg, #5e7fab 0, #3f5a80 48px, #3e4a55 2512px, #74747a 2512px, #66666c 100%);
}

.dock {
	width: 2464px;
	margin: 2px 0 0 48px;
	box-sizing: border-box;
	display: flex;
	padding-left: 3px;
	background: linear-gradient(90deg, #2b435e, #3a4756 50%, #3c4a56);
	border-radius: 10px 10px 0 0;
	box-shadow: 0 -2px 0 #222c37;
}

.ditem {
	width: 63.9px;
	flex: none;
	display: flex;
	flex-direction: column;
	align-items: center;
}

.ditem > svg {
	display: block;
	width: 60px;
	height: 60px;
	margin-top: 6px;
	flex: none;
	overflow: visible;
}

.ditem > .dock-java {
	width: 48px;
	height: 50px;
	margin: 11px 0 5px;
}

.dot {
	width: 6px;
	height: 6px;
	margin-top: 4px;
	flex: none;
	border-radius: 50%;
	background: #b7c4d3;
}

.dot-off {
	background: transparent;
}

.divider {
	width: 1px;
	height: 58px;
	margin: 10px 12px 0 16px;
	flex: none;
	background: #6d7883;
}

.badge-text {
	font: 600 13px "Open Sans", sans-serif;
	fill: #fff;
	text-anchor: middle;
}

.badge-text-small {
	font-size: 11px;
}

.icon-letter {
	font: 700 25px "Open Sans", sans-serif;
	fill: #fff;
	text-anchor: middle;
}

.icon-skype {
	font: 700 38px "Open Sans", sans-serif;
	fill: #fff;
	text-anchor: middle;
}

.icon-pc {
	font: 700 17px "Liberation Mono", monospace;
	fill: #fff;
	text-anchor: middle;
}

.icon-fz {
	font: italic 700 44px "Liberation Sans", sans-serif;
	fill: #fff;
	text-anchor: middle;
}
```
